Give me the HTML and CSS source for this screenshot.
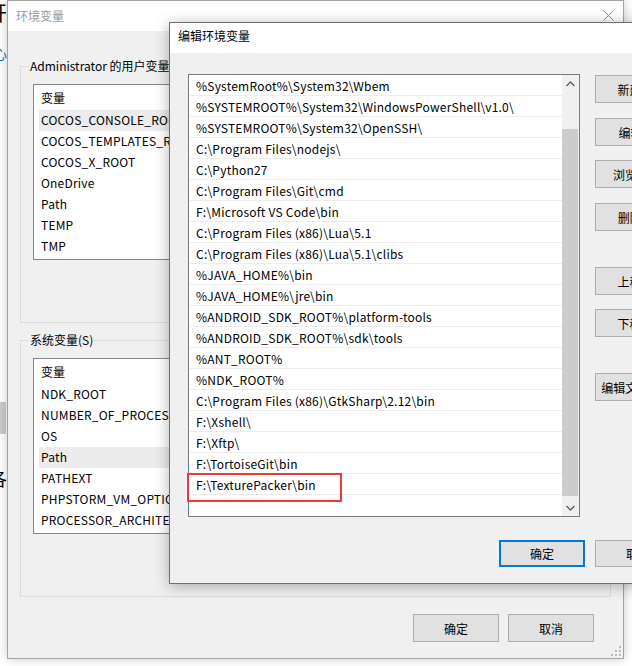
FILE: index.html
```html
<!DOCTYPE html>
<html lang="zh-CN">
<head>
    <meta charset="UTF-8">
    <meta name="viewport" content="width=device-width, initial-scale=1.0">
    <title>编辑环境变量</title>
    <link rel="stylesheet" href="styles.css">
</head>
<body>
    <div class="desktop">
        <div class="behind">
            <span class="frag frag-top">开</span>
            <span class="frag frag-link">心</span>
            <div class="frag-bar"></div>
            <span class="frag frag-bottom">各</span>
        </div>

        <!-- 环境变量 (inactive, behind) -->
        <div class="window env-window">
            <div class="titlebar">
                <span class="title inactive">环境变量</span>
                <svg class="close" width="11" height="11" viewBox="0 0 11 11">
                    <path d="M0.5 0.5 L10.5 10.5 M10.5 0.5 L0.5 10.5" stroke="#8a8a8a" stroke-width="1" fill="none"/>
                </svg>
            </div>
            <div class="env-body">
                <div class="group">
                    <div class="group-title">Administrator 的用户变量(U)</div>
                    <div class="listview">
                        <div class="lv-head">变量</div>
                        <div class="lv-row selected">COCOS_CONSOLE_ROOT</div>
                        <div class="lv-row">COCOS_TEMPLATES_ROOT</div>
                        <div class="lv-row">COCOS_X_ROOT</div>
                        <div class="lv-row">OneDrive</div>
                        <div class="lv-row">Path</div>
                        <div class="lv-row">TEMP</div>
                        <div class="lv-row">TMP</div>
                    </div>
                </div>

                <div class="group second">
                    <div class="group-title">系统变量(S)</div>
                    <div class="listview">
                        <div class="lv-head">变量</div>
                        <div class="lv-row">NDK_ROOT</div>
                        <div class="lv-row">NUMBER_OF_PROCESSORS</div>
                        <div class="lv-row">OS</div>
                        <div class="lv-row selected">Path</div>
                        <div class="lv-row">PATHEXT</div>
                        <div class="lv-row">PHPSTORM_VM_OPTIONS</div>
                        <div class="lv-row">PROCESSOR_ARCHITECTURE</div>
                    </div>
                </div>

                <div class="env-actions">
                    <button class="btn">确定</button>
                    <button class="btn">取消</button>
                </div>
            </div>
            <svg class="grip" width="10" height="10" viewBox="0 0 10 10">
                <rect x="8" y="0" width="2" height="2" fill="#bcbcbc"/>
                <rect x="4" y="4" width="2" height="2" fill="#bcbcbc"/>
                <rect x="8" y="4" width="2" height="2" fill="#bcbcbc"/>
                <rect x="0" y="8" width="2" height="2" fill="#bcbcbc"/>
                <rect x="4" y="8" width="2" height="2" fill="#bcbcbc"/>
                <rect x="8" y="8" width="2" height="2" fill="#bcbcbc"/>
            </svg>
        </div>

        <!-- 编辑环境变量 (active, front) -->
        <div class="window edit-window">
            <div class="titlebar">
                <span class="title">编辑环境变量</span>
            </div>
            <div class="edit-body">
                <div class="edit-main">
                    <div class="pathlist">
                        <div class="items">
                            <div class="item">%SystemRoot%\System32\Wbem</div>
                            <div class="item">%SYSTEMROOT%\System32\WindowsPowerShell\v1.0\</div>
                            <div class="item">%SYSTEMROOT%\System32\OpenSSH\</div>
                            <div class="item">C:\Program Files\nodejs\</div>
                            <div class="item">C:\Python27</div>
                            <div class="item">C:\Program Files\Git\cmd</div>
                            <div class="item">F:\Microsoft VS Code\bin</div>
                            <div class="item">C:\Program Files (x86)\Lua\5.1</div>
                            <div class="item">C:\Program Files (x86)\Lua\5.1\clibs</div>
                            <div class="item">%JAVA_HOME%\bin</div>
                            <div class="item">%JAVA_HOME%\jre\bin</div>
                            <div class="item">%ANDROID_SDK_ROOT%\platform-tools</div>
                            <div class="item">%ANDROID_SDK_ROOT%\sdk\tools</div>
                            <div class="item">%ANT_ROOT%</div>
                            <div class="item">%NDK_ROOT%</div>
                            <div class="item">C:\Program Files (x86)\GtkSharp\2.12\bin</div>
                            <div class="item">F:\Xshell\</div>
                            <div class="item">F:\Xftp\</div>
                            <div class="item">F:\TortoiseGit\bin</div>
                            <div class="item marked">F:\TexturePacker\bin<span class="mark"></span></div>
                        </div>
                        <div class="scrollbar">
                            <div class="sb-btn">
                                <svg width="9" height="6" viewBox="0 0 9 6"><polyline points="0.5,5 4.5,1 8.5,5" stroke="#606060" stroke-width="1.4" fill="none"/></svg>
                            </div>
                            <div class="sb-track"><div class="sb-thumb"></div></div>
                            <div class="sb-btn">
                                <svg width="9" height="6" viewBox="0 0 9 6"><polyline points="0.5,1 4.5,5 8.5,1" stroke="#606060" stroke-width="1.4" fill="none"/></svg>
                            </div>
                        </div>
                    </div>
                    <div class="side-buttons">
                        <button class="btn">新建(N)</button>
                        <button class="btn">编辑(E)</button>
                        <button class="btn gap-14">浏览(B)...</button>
                        <button class="btn">删除(D)</button>
                        <button class="btn gap-36">上移(U)</button>
                        <button class="btn gap-14">下移(O)</button>
                        <button class="btn gap-36">编辑文本(T)...</button>
                    </div>
                </div>
                <div class="edit-actions">
                    <button class="btn default">确定</button>
                    <button class="btn">取消</button>
                </div>
            </div>
        </div>
    </div>
</body>
</html>
```

FILE: styles.css
```css
*{
    box-sizing: border-box;
}

body{
    margin: 0;
    background-color: #ffffff;
    font-family: "Microsoft YaHei UI", "Microsoft YaHei", "Noto Sans CJK SC", sans-serif;
    font-size: 12px;
    color: #000;
    overflow: hidden;
}

.desktop{
    position: relative;
    width: 632px;
    height: 666px;
    overflow: hidden;
}

/* bits of the page behind the dialogs */
.behind{
    display: flex;
    flex-direction: column;
    align-items: flex-start;
}

.frag{
    display: block;
    line-height: 1;
}

.frag-top{
    font-size: 20px;
    margin: 3px 0 0 -13px;
}

.frag-link{
    font-size: 14px;
    color: #1e6fc8;
    margin: 23px 0 0 -7px;
}

.frag-bar{
    width: 6px;
    height: 32px;
    background-color: #cccccc;
    margin-top: 342px;
}

.frag-bottom{
    font-size: 18px;
    margin: 35px 0 0 -11px;
}

/* windows */
.window{
    position: absolute;
    display: flex;
    flex-direction: column;
    background-color: #f0f0f0;
}

.titlebar{
    height: 30px;
    background-color: #ffffff;
    display: flex;
    align-items: center;
    justify-content: space-between;
    padding: 0 9px 2px 8px;
    flex-shrink: 0;
}

.title.inactive{
    color: #9a9a9a;
}

.close{
    display: block;
}

.btn{
    font-family: inherit;
    font-size: 12px;
    color: #000;
    width: 86px;
    height: 28px;
    padding: 0;
    background-color: #e1e1e1;
    border: 1px solid #adadad;
    white-space: nowrap;
    overflow: hidden;
}

/* 环境变量 */
.env-window{
    left: 7px;
    top: 0;
    width: 617px;
    height: 659px;
    border: 1px solid #a3a3a3;
    box-shadow: 0 0 10px rgba(0, 0, 0, 0.22);
}

.env-body{
    flex: 1;
    padding: 35px 12px 0 12px;
    display: flex;
    flex-direction: column;
}

.group{
    border: 1px solid #dcdcdc;
    padding: 0 12px 62px 12px;
}

.group.second{
    margin-top: 17px;
}

.group-title{
    width: fit-content;
    line-height: 14px;
    margin: -8px 0 11px -4px;
    padding: 0 1px;
    background-color: #f0f0f0;
    white-space: nowrap;
}

.listview{
    height: 176px;
    background-color: #ffffff;
    border: 1px solid #828790;
    overflow: hidden;
}

.lv-head{
    height: 25px;
    line-height: 25px;
    padding-left: 7px;
}

.lv-row{
    height: 21px;
    line-height: 20px;
    margin-left: 5px;
    padding-left: 2px;
    letter-spacing: 0.2px;
    white-space: nowrap;
}

.lv-row.selected{
    background-color: #ececec;
}

.env-actions{
    display: flex;
    justify-content: flex-end;
    gap: 9px;
    margin-top: 17px;
    padding-right: 17px;
}

.grip{
    position: absolute;
    right: 2px;
    bottom: 2px;
}

/* 编辑环境变量 */
.edit-window{
    left: 169px;
    top: 22px;
    width: 533px;
    height: 562px;
    border: 1px solid #6f6f6f;
    box-shadow: 0 2px 14px rgba(0, 0, 0, 0.3);
}

.edit-window .titlebar{
    padding-bottom: 5px;
}

.edit-body{
    flex: 1;
    padding: 21px 20px 0 18px;
    display: flex;
    flex-direction: column;
}

.edit-main{
    display: flex;
    gap: 15px;
}

.pathlist{
    width: 392px;
    height: 443px;
    border: 1px solid #7a7a7a;
    background-color: #ffffff;
    display: flex;
}

.items{
    flex: 1;
    padding-left: 1px;
}

.item{
    position: relative;
    height: 21px;
    line-height: 18px;
    padding: 2px 0 0 6px;
    border-bottom: 1px solid #ececec;
    letter-spacing: 0.22px;
    white-space: nowrap;
}

.mark{
    position: absolute;
    left: -3px;
    top: -1px;
    width: 155px;
    height: 29px;
    border: 2px solid #ee3a3a;
}

.scrollbar{
    width: 17px;
    background-color: #f0f0f0;
    display: flex;
    flex-direction: column;
}

.sb-btn{
    height: 17px;
    display: flex;
    align-items: center;
    justify-content: center;
}

.sb-btn svg{
    display: block;
}

.sb-track{
    flex: 1;
    padding: 37px 1px 3px 0;
}

.sb-thumb{
    height: 100%;
    background-color: #cdcdcd;
}

.side-buttons{
    display: flex;
    flex-direction: column;
    padding-top: 1px;
}

.side-buttons .btn{
    margin-top: 15px;
}

.side-buttons .btn:first-child{
    margin-top: 0;
}

.side-buttons .btn.gap-14{
    margin-top: 14px;
}

.side-buttons .btn.gap-36{
    margin-top: 36px;
}

.edit-actions{
    display: flex;
    justify-content: flex-end;
    gap: 10px;
    margin-top: 23px;
}

.edit-actions .btn{
    height: 27px;
}

.btn.default{
    border: 2px solid #0078d7;
}
```
